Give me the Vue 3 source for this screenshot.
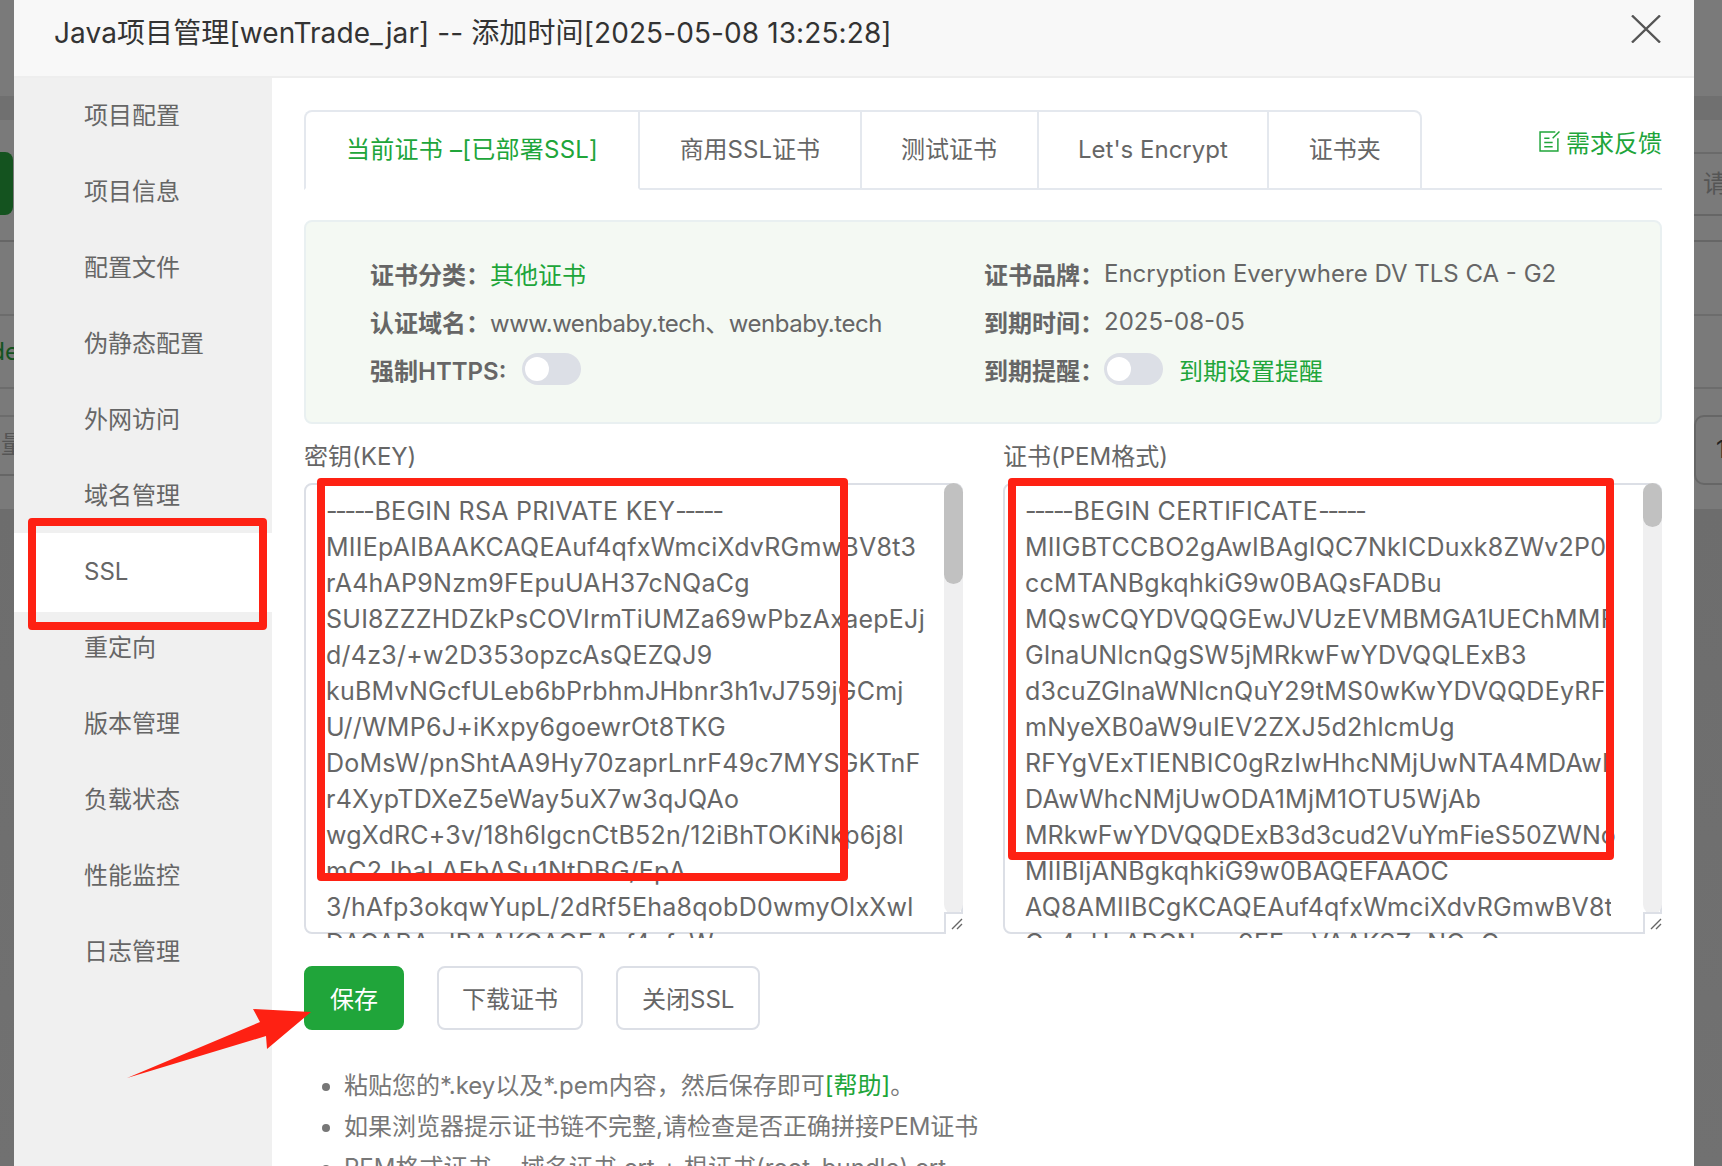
<script setup>
const menu = ['项目配置', '项目信息', '配置文件', '伪静态配置', '外网访问', '域名管理', 'SSL', '重定向', '版本管理', '负载状态', '性能监控', '日志管理']
const tabs = ['当前证书 –[已部署SSL]', '商用SSL证书', '测试证书', "Let's Encrypt", '证书夹']
const keyLines = [
  'MIIEpAIBAAKCAQEAuf4qfxWmciXdvRGmwBV8t3',
  'rA4hAP9Nzm9FEpuUAH37cNQaCg',
  'SUI8ZZZHDZkPsCOVIrmTiUMZa69wPbzAxaepEJj',
  'd/4z3/+w2D353opzcAsQEZQJ9',
  'kuBMvNGcfULeb6bPrbhmJHbnr3h1vJ759jGCmj',
  'U//WMP6J+iKxpy6goewrOt8TKG',
  'DoMsW/pnShtAA9Hy70zaprLnrF49c7MYSGKTnF',
  'r4XypTDXeZ5eWay5uX7w3qJQAo',
  'wgXdRC+3v/18h6lgcnCtB52n/12iBhTOKiNkp6j8l',
  'mC2JbaLAEbASu1NtDBG/EpA',
  '3/hAfp3okqwYupL/2dRf5Eha8qobD0wmyOlxXwl',
  'DACABAwIBAAKCAQEAuf4qfxW'
]
const certLines = [
  'MIIGBTCCBO2gAwIBAgIQC7NkICDuxk8ZWv2P05',
  'ccMTANBgkqhkiG9w0BAQsFADBu',
  'MQswCQYDVQQGEwJVUzEVMBMGA1UEChMMF',
  'GlnaUNlcnQgSW5jMRkwFwYDVQQLExB3',
  'd3cuZGlnaWNlcnQuY29tMS0wKwYDVQQDEyRFb',
  'mNyeXB0aW9uIEV2ZXJ5d2hlcmUg',
  'RFYgVExTIENBIC0gRzIwHhcNMjUwNTA4MDAwM',
  'DAwWhcNMjUwODA1MjM1OTU5WjAb',
  'MRkwFwYDVQQDExB3d3cud2VuYmFieS50ZWNo',
  'MIIBIjANBgkqhkiG9w0BAQEFAAOC',
  'AQ8AMIIBCgKCAQEAuf4qfxWmciXdvRGmwBV8t',
  'Oc4pUoABCNxxo9FFsxVAAKSZgNOnC'
]
</script>

<template>
  <div class="page">
    <div class="gutter gutter-left">
      <span class="ghost-btn"></span>
      <span class="ghost-de">de</span>
      <span class="ghost-liang">量</span>
    </div>

    <div class="modal">
      <header class="head">
        <h1 class="title">Java项目管理[wenTrade_jar] -- 添加时间[2025-05-08 13:25:28]</h1>
        <svg class="close" width="30" height="28" viewBox="0 0 30 28" fill="none" stroke="#555" stroke-width="2.4">
          <path d="M1 0.5L29 27.5M29 0.5L1 27.5" />
        </svg>
      </header>

      <div class="body">
        <nav class="side">
          <div v-for="m in menu" :key="m" class="side-item" :class="{ on: m === 'SSL' }">{{ m }}</div>
        </nav>

        <main class="content">
          <div class="tabbar">
            <div class="tabs">
              <div v-for="(t, i) in tabs" :key="t" class="tab" :class="{ active: i === 0 }">{{ t }}</div>
            </div>
            <a class="feedback">
              <svg width="21" height="21" viewBox="0 0 20 20" fill="none" stroke="#20a53a" stroke-width="1.4">
                <path d="M15.5 1H1v18h17V7" />
                <path d="M5 7h5M5 11h8M5 15h8" />
                <path d="M19.5 0.5L13 7" />
              </svg>
              <span>需求反馈</span>
            </a>
          </div>

          <section class="info">
            <div class="row"><b class="lab">证书分类：</b><span class="green">其他证书</span></div>
            <div class="row"><b class="lab">证书品牌：</b><span>Encryption Everywhere DV TLS CA - G2</span></div>
            <div class="row"><b class="lab">认证域名：</b><span class="domain">www.wenbaby.tech、wenbaby.tech</span></div>
            <div class="row"><b class="lab">到期时间：</b><span>2025-08-05</span></div>
            <div class="row"><b class="lab https">强制HTTPS:</b><i class="toggle"><em></em></i></div>
            <div class="row"><b class="lab">到期提醒：</b><i class="toggle"><em></em></i><span class="green remind">到期设置提醒</span></div>
          </section>

          <div class="editors">
            <div class="field">
              <label class="field-label">密钥(KEY)</label>
              <div class="editor">
                <div class="lines">
                  <div class="line"><span class="dash">-----</span>BEGIN RSA PRIVATE KEY<span class="dash">-----</span></div>
                  <div v-for="(l, i) in keyLines" :key="i" class="line">{{ l }}</div>
                </div>
                <div class="track"><span class="thumb thumb-key"></span></div>
                <div class="grip">
                  <svg width="12" height="12" viewBox="0 0 12 12" stroke="#666" stroke-width="1.4"><path d="M1 11L11 1M6 11L11 6" /></svg>
                </div>
              </div>
            </div>
            <div class="field">
              <label class="field-label">证书(PEM格式)</label>
              <div class="editor">
                <div class="lines">
                  <div class="line"><span class="dash">-----</span>BEGIN CERTIFICATE<span class="dash">-----</span></div>
                  <div v-for="(l, i) in certLines" :key="i" class="line" :class="i === 8 ? 'tight' : 'clip'">{{ l }}</div>
                </div>
                <div class="track"><span class="thumb thumb-cert"></span></div>
                <div class="grip">
                  <svg width="12" height="12" viewBox="0 0 12 12" stroke="#666" stroke-width="1.4"><path d="M1 11L11 1M6 11L11 6" /></svg>
                </div>
              </div>
            </div>
          </div>

          <div class="actions">
            <button class="btn primary">保存</button>
            <button class="btn">下载证书</button>
            <button class="btn">关闭SSL</button>
          </div>

          <ul class="tips">
            <li>粘贴您的*.key以及*.pem内容，然后保存即可<span class="green">[帮助]</span>。</li>
            <li>如果浏览器提示证书链不完整,请检查是否正确拼接PEM证书</li>
            <li>PEM格式证书 = 域名证书.crt + 根证书(root_bundle).crt</li>
          </ul>
        </main>
      </div>
    </div>

    <div class="gutter gutter-right">
      <span class="ghost-qing">请</span>
      <span class="ghost-input">1</span>
    </div>

    <span class="mark mark-ssl"></span>
    <span class="mark mark-key"></span>
    <span class="mark mark-cert"></span>
    <svg class="arrow" width="1722" height="1166" viewBox="0 0 1722 1166">
      <path d="M311 1012L253 1009L260 1022L127 1078L266 1036L267 1049Z" fill="#fe2113" />
    </svg>
  </div>
</template>

<style>
html, body { margin: 0; overflow: hidden; }
</style>

<style scoped>
.page {
  position: relative;
  display: flex;
  width: 1722px;
  height: 1166px;
  overflow: hidden;
  background: #777;
  color: #666;
  font-family: Inter, "Noto Sans CJK SC", sans-serif;
  font-size: 24px;
}
.gutter {
  position: relative;
  overflow: hidden;
  background:
    linear-gradient(#707070, #707070) 0 96px / 100% 24px no-repeat,
    linear-gradient(#6d6d6d, #717171) 0 509px / 100% 657px no-repeat,
    #7a7a7a;
}
.gutter-left { width: 14px; flex: none; }
.gutter-right { flex: 1; }
.gutter::before {
  content: "";
  position: absolute;
  inset: 0;
  background:
    linear-gradient(#666, #666) 0 240px / 100% 2px no-repeat,
    linear-gradient(#6c6c6c, #6c6c6c) 0 314px / 100% 2px no-repeat,
    linear-gradient(#6c6c6c, #6c6c6c) 0 387px / 100% 2px no-repeat;
}
.gutter-left::after {
  content: "";
  position: absolute;
  inset: 0;
  background:
    linear-gradient(#6c6c6c, #6c6c6c) 0 415px / 100% 2px no-repeat,
    linear-gradient(#666, #666) 0 474px / 100% 2px no-repeat;
}
.gutter-right::after {
  content: "";
  position: absolute;
  inset: 0;
  background:
    linear-gradient(#6a6a6a, #6a6a6a) 0 152px / 100% 2px no-repeat,
    linear-gradient(#666, #666) 0 214px / 100% 2px no-repeat;
}
.ghost-btn {
  position: absolute;
  right: 1px;
  top: 152px;
  width: 30px;
  height: 63px;
  border-radius: 8px;
  background: #14531f;
}
.ghost-de {
  position: absolute;
  right: -5px;
  top: 335px;
  color: #14531f;
  line-height: 34px;
  white-space: nowrap;
}
.ghost-liang {
  position: absolute;
  left: 1px;
  top: 428px;
  color: #555;
  line-height: 34px;
  white-space: nowrap;
}
.ghost-qing {
  position: absolute;
  left: 9px;
  top: 167px;
  color: #555;
  line-height: 34px;
}
.ghost-input {
  position: absolute;
  left: 0;
  top: 415px;
  width: 80px;
  height: 70px;
  box-sizing: border-box;
  border: 2px solid #666;
  border-radius: 10px;
  color: #222;
  line-height: 66px;
  padding-left: 20px;
}

.modal {
  width: 1680px;
  flex: none;
  display: flex;
  flex-direction: column;
  background: #fff;
  min-height: 0;
}
.head {
  position: relative;
  height: 76px;
  flex: none;
  background: #f8f8f8;
  border-bottom: 2px solid #eee;
  display: flex;
  align-items: flex-start;
  padding-left: 40px;
}
.title {
  margin: 12px 0 0;
  font-size: 28px;
  line-height: 42px;
  font-weight: 400;
  letter-spacing: 0.1px;
  color: #333;
  white-space: nowrap;
}
.close { position: absolute; left: 1617px; top: 15px; }

.body { flex: 1; display: flex; min-height: 0; }
.side {
  width: 258px;
  flex: none;
  background: #f0f0f0;
}
.side-item {
  height: 76px;
  line-height: 76px;
  padding-left: 70px;
}
.side-item.on { background: #fff; box-shadow: 0 -1px 0 #fff, 0 2px 0 #fff; }

.content { flex: 1; padding: 32px 32px 0 32px; min-width: 0; }
.tabbar {
  display: flex;
  justify-content: space-between;
  height: 80px;
  box-sizing: border-box;
  border-bottom: 2px solid #e4e8ee;
}
.tabs { display: flex; height: 80px; }
.tab {
  box-sizing: border-box;
  padding: 0 39.5px;
  height: 80px;
  line-height: 76px;
  background: #fff;
  border-top: 2px solid #e4e8ee;
  border-right: 2px solid #e4e8ee;
  border-bottom: 2px solid #e4e8ee;
  white-space: nowrap;
}
.tab:first-child { border-left: 2px solid #e4e8ee; border-top-left-radius: 8px; padding: 0 40px; }
.tab:last-child { border-top-right-radius: 8px; }
.tab.active { color: #20a53a; border-bottom-color: #fff; letter-spacing: 0.25px; }
.feedback {
  display: flex;
  align-items: center;
  gap: 6px;
  height: 48px;
  margin-top: 7px;
  color: #20a53a;
}

.green { color: #20a53a; }
.info {
  box-sizing: border-box;
  height: 204px;
  margin-top: 30px;
  padding: 27px 64px 0;
  border: 2px solid #e9f0f1;
  border-radius: 8px;
  background: #f4f9f3;
  display: grid;
  grid-template-columns: 614px 1fr;
  grid-auto-rows: 48px;
}
.row { display: flex; align-items: center; white-space: nowrap; }
.lab { font-weight: 600; color: #666; }
.domain { letter-spacing: -0.48px; }
.https { margin-right: 16px; }
.toggle {
  display: block;
  box-sizing: border-box;
  width: 59px;
  height: 32px;
  padding: 4px 3px;
  border-radius: 16px;
  background: #dcdfe6;
}
.toggle em { display: block; width: 24px; height: 24px; border-radius: 50%; background: #fff; }
.remind { margin-left: 16px; }

.editors { display: flex; justify-content: space-between; margin-top: 14px; }
.field { width: 659px; }
.field-label { display: block; height: 38px; line-height: 38px; margin-bottom: 7px; }
.editor {
  position: relative;
  box-sizing: border-box;
  height: 451px;
  padding: 8px 20px 0;
  border: 2px solid #dcdfe6;
  border-radius: 8px;
  line-height: 36px;
  font-size: 25px;
  letter-spacing: 0.25px;
  white-space: nowrap;
}
.lines { height: 445px; overflow: hidden; }
.line { height: 36px; }
.clip { width: 586px; overflow: hidden; }
.tight { letter-spacing: 0; }
.dash { letter-spacing: -2.2px; margin-right: 2px; }
.track {
  position: absolute;
  top: -2px;
  right: -2px;
  bottom: 18px;
  width: 19px;
  border-radius: 10px;
  background: #efeff0;
}
.thumb { display: block; border-radius: 10px; background: #c1c1c1; }
.thumb-key { height: 101px; }
.thumb-cert { height: 44px; }
.grip {
  position: absolute;
  right: -2px;
  bottom: -2px;
  width: 19px;
  height: 22px;
  box-sizing: border-box;
  background: #fff;
  border-left: 2px solid #dcdfe6;
  border-top: 2px solid #dcdfe6;
  display: flex;
  align-items: center;
  justify-content: flex-end;
}

.actions { display: flex; gap: 33px; margin-top: 32px; }
.btn {
  height: 64px;
  padding: 0 23px 2px;
  box-sizing: border-box;
  border: 2px solid #dcdfe6;
  border-radius: 8px;
  background: #fff;
  color: #666;
  font: inherit;
}
.btn:last-child { padding: 0 24px 2px; }
.btn.primary { width: 100px; background: #20a53a; border-color: #20a53a; color: #fff; padding: 0 0 2px; }

.tips { margin: 35px 0 0; padding: 0 0 0 40px; color: #777; }
.tips li { line-height: 41px; white-space: nowrap; }

.mark {
  position: absolute;
  box-sizing: border-box;
  border: 8px solid #fe2113;
  border-radius: 4px;
}
.mark-ssl { left: 28px; top: 518px; width: 239px; height: 112px; }
.mark-key { left: 317px; top: 478px; width: 531px; height: 403px; }
.mark-cert { left: 1008px; top: 478px; width: 606px; height: 382px; }
.arrow { position: absolute; left: 0; top: 0; pointer-events: none; }
</style>
